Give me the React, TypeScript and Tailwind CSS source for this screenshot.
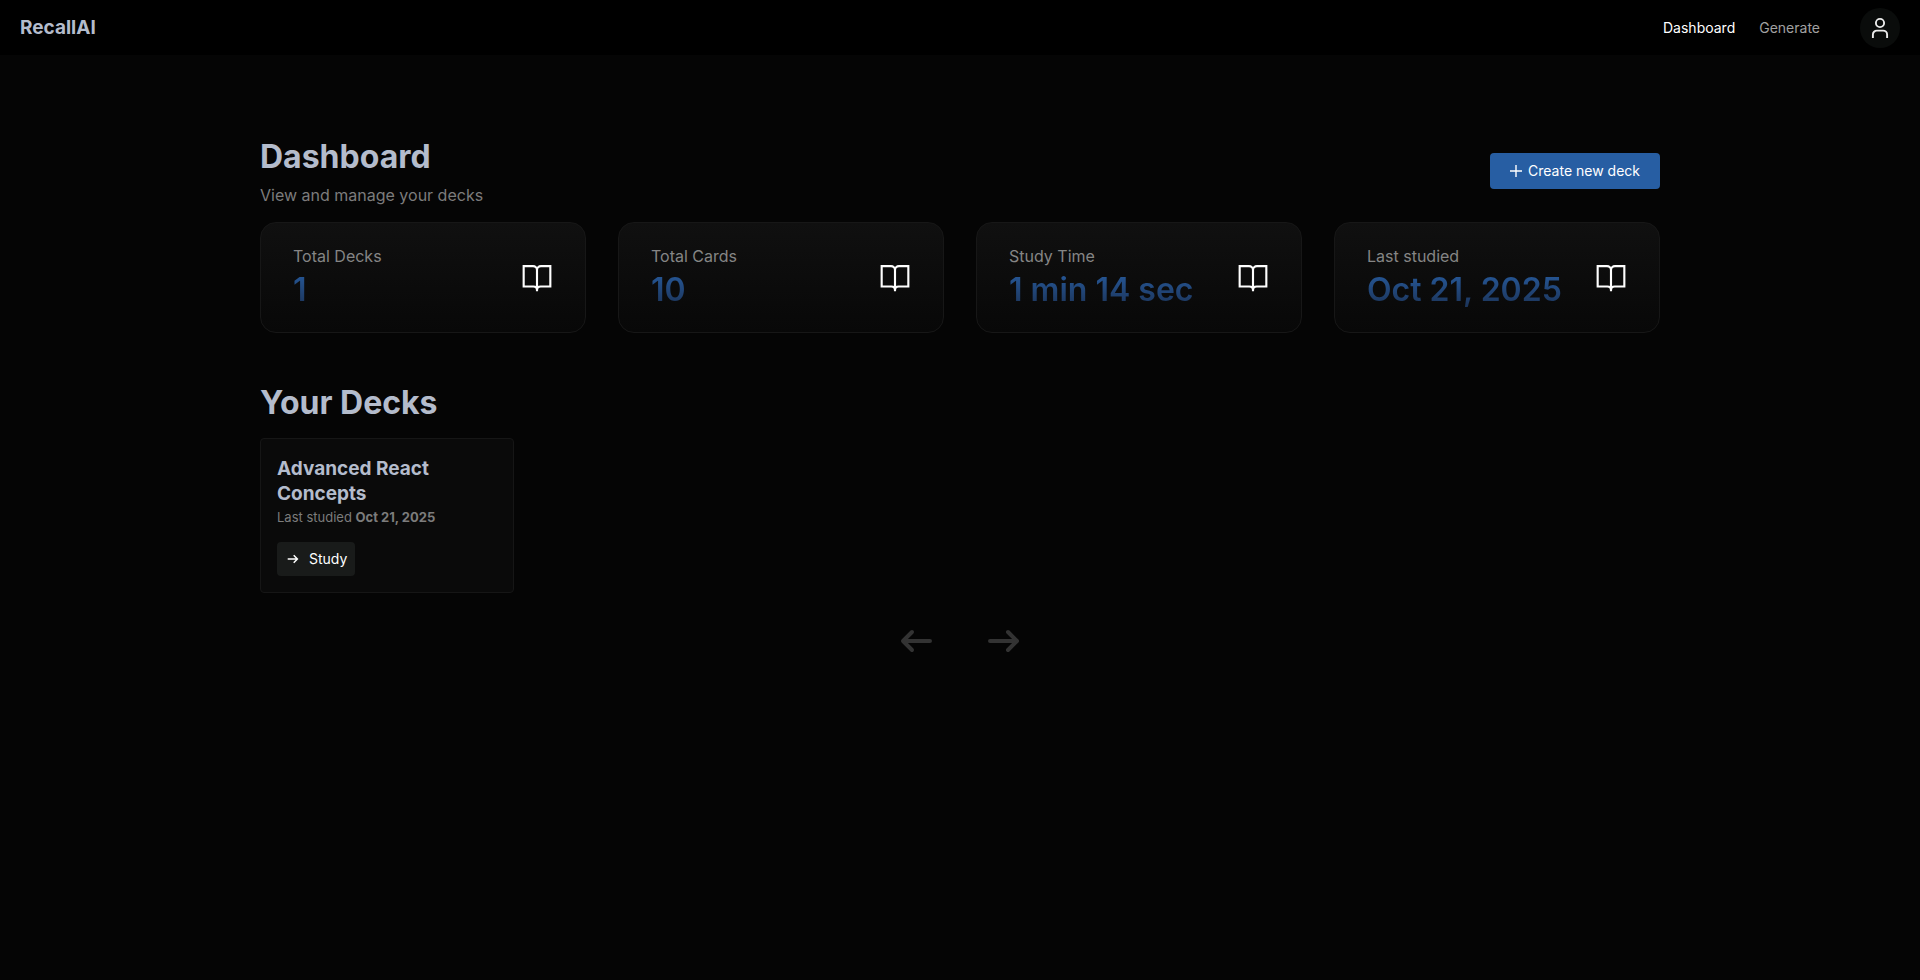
const stats = [
  { label: "Total Decks", value: "1" },
  { label: "Total Cards", value: "10" },
  { label: "Study Time", value: "1 min 14 sec" },
  { label: "Last studied", value: "Oct 21, 2025" },
];

function UserIcon() {
  return (
    <svg viewBox="0 0 24 24" className="size-6" fill="none" stroke="currentColor" strokeWidth="1.9" aria-hidden="true">
      <circle cx="12" cy="7" r="4.1" />
      <path d="M4.9 22v-3.4a4 4 0 0 1 4-4h6.2a4 4 0 0 1 4 4V22" />
    </svg>
  );
}

function BookIcon() {
  return (
    <svg viewBox="0 0 24 24" className="size-8 shrink-0 text-white" fill="none" stroke="currentColor" strokeWidth="1.6" aria-hidden="true">
      <path d="M12 21.9V6c0-1.7-1.3-2.9-3-2.9H2v15.3h7.3c1.6 0 2.7 1 2.7 2.4 0-1.4 1.1-2.4 2.7-2.4H22V3.1h-7c-1.7 0-3 1.2-3 2.9" />
    </svg>
  );
}

function PlusIcon() {
  return (
    <svg viewBox="0 0 12 12" className="size-3" fill="none" stroke="currentColor" strokeWidth="1.4" aria-hidden="true">
      <path d="M6 0v12M0 6h12" />
    </svg>
  );
}

function StudyIcon() {
  return (
    <svg viewBox="0 0 16 16" className="size-4" fill="none" stroke="currentColor" strokeWidth="1.5" aria-hidden="true">
      <path d="M2.7 8h9.6M8.7 4.3 12.4 8l-3.7 3.7" />
    </svg>
  );
}

function PageArrow({ back = false }: { back?: boolean }) {
  return (
    <svg viewBox="0 0 44 44" className="size-11" fill="none" stroke="currentColor" strokeWidth="4" strokeLinecap="round" strokeLinejoin="round" aria-hidden="true">
      <path d={back ? "M36 22H9.5M18 13l-9 9 9 9" : "M8 22h26.5M26 13l9 9-9 9"} />
    </svg>
  );
}

function Header() {
  return (
    <header className="flex h-[55px] items-center justify-between bg-black px-5">
      <a href="#home" className="text-[19px] leading-7 font-bold text-[#b4bccc]">RecallAI</a>
      <div className="flex items-center gap-10">
        <nav className="flex items-center gap-6 text-sm">
          <a href="#dashboard" className="text-white">Dashboard</a>
          <a href="#generate" className="text-[#a1a1a1]">Generate</a>
        </nav>
        <button aria-label="Account" className="flex size-10 items-center justify-center rounded-full bg-[#0a0c0b] text-[#ebebeb]">
          <UserIcon />
        </button>
      </div>
    </header>
  );
}

function StatCard({ label, value }: { label: string; value: string }) {
  return (
    <div className="flex items-center justify-between rounded-2xl border border-[#171717] bg-linear-to-b from-[#101010] to-[#080808] px-8 pt-[21px] pb-5">
      <div>
        <p className="text-base text-[#858585]">{label}</p>
        <p className="bg-linear-to-b from-[#275ea3] to-[#1a2f50] bg-clip-text text-[32px] leading-11 font-semibold text-transparent">{value}</p>
      </div>
      <BookIcon />
    </div>
  );
}

export default function App() {
  return (
    <div className="min-h-screen bg-[#050505] font-['Inter',sans-serif] text-white">
      <Header />
      <main className="mx-auto max-w-[1440px] px-5 pt-20">
        <div className="flex items-center justify-between">
          <div>
            <h1 className="text-[32px] leading-11 font-bold text-[#b4bccc]">Dashboard</h1>
            <p className="mt-1 text-base text-[#7c7c7c]">View and manage your decks</p>
          </div>
          <button className="flex h-9 items-center gap-1.5 rounded bg-[#275ea3] px-5 text-sm">
            <PlusIcon />
            Create new deck
          </button>
        </div>
        <section className="mt-[15px] grid grid-cols-4 gap-8">
          {stats.map((s) => <StatCard key={s.label} {...s} />)}
        </section>
        <h2 className="mt-12 text-[32px] leading-11 font-bold text-[#b4bccc]">Your Decks</h2>
        <section className="mt-[13px] grid grid-cols-[254px]">
          <article className="rounded border border-[#161616] bg-[#0a0a0a] px-4 pt-[17px] pb-4">
            <h3 className="text-[19px] leading-[25px] font-bold text-[#b4bccc]">Advanced React Concepts</h3>
            <p className="text-[13px] leading-[22px] text-[#7c7c7c]">Last studied <strong>Oct 21, 2025</strong></p>
            <button className="mt-3.5 flex h-[34px] items-center gap-2 rounded bg-[#191b1a] px-2 text-sm">
              <StudyIcon />
              Study
            </button>
          </article>
        </section>
        <nav aria-label="Deck pages" className="mt-[26px] flex justify-center gap-11 text-[#333333]">
          <button aria-label="Previous page"><PageArrow back /></button>
          <button aria-label="Next page"><PageArrow /></button>
        </nav>
      </main>
    </div>
  );
}
